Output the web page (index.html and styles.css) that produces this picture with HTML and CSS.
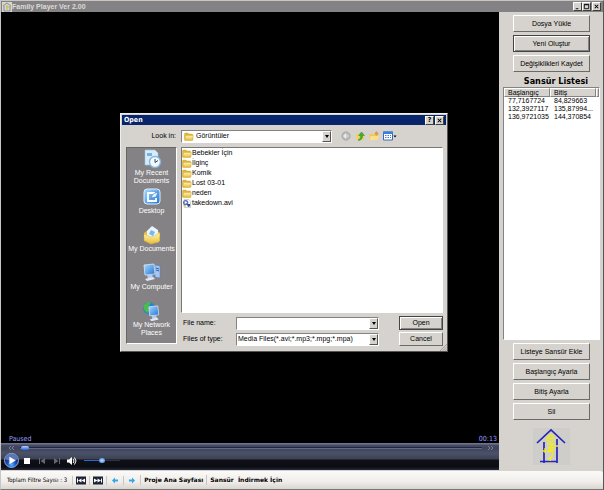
FILE: index.html
```html
<!DOCTYPE html>
<html lang="tr">
<head>
<meta charset="utf-8">
<title>Family Player Ver 2.00</title>
<link rel="stylesheet" href="styles.css">
</head>
<body>
<svg class="defs" aria-hidden="true">
  <defs>
    <linearGradient id="gold" x2="0" y2="1"><stop stop-color="#fff6ae"/><stop offset="1" stop-color="#e8bd3c"/></linearGradient>
    <linearGradient id="blue" x2="1" y2="1"><stop stop-color="#a8dcff"/><stop offset="1" stop-color="#2272d4"/></linearGradient>
    <radialGradient id="orb" cy=".8"><stop stop-color="#58b8ff"/><stop offset=".6" stop-color="#1c50c8"/><stop offset="1" stop-color="#143084"/></radialGradient>
    <symbol id="folder" viewBox="0 0 10 9"><path d="M.5 2q0-1 1-1h2.300l1 1h3q1 0 1 1v4.500q0 .8-.8.8H1.300q-.8 0-.8-.8z" fill="#e3b53a" stroke="#c59a30" stroke-width=".4"/><path d="M1.500 3.500h7.800L8.500 8.200H.8z" fill="url(#gold)" stroke="#cfa63a" stroke-width=".4"/></symbol>
    <symbol id="media" viewBox="0 0 10 10"><path d="M2 .5h5l2 2v7H2z" fill="#fff" stroke="#999" stroke-width=".5"/><circle cx="3.500" cy="4" r="3" fill="#5773b8"/><path d="M2.500 2.300v3.200L5.500 4z" fill="#fff"/><path d="M5 5.500h3.500V8L6 9z" fill="#334a8c"/><path d="M1 7l3 1" stroke="#d8a62c"/></symbol>
    <symbol id="screen" viewBox="0 0 20 20"><path d="M2 2l10-1 1 10-10 1z" fill="url(#blue)" stroke="#d5e9fa" stroke-width=".8"/><path d="M5 12l5-1 1 4-5 1z" fill="#b8cbe4"/><path d="M3 16l8-2 2 2-8 2z" fill="#dfe8f7"/></symbol>
  </defs>
</svg>

<header class="titlebar">
  <svg class="app-icon" viewBox="0 0 10 10"><path fill="#d8d6c8" d="M0 0h10v10H0z"/><path d="M1 4l4-3 4 3M2 4v5h6V4" fill="none" stroke="#6a78a8" stroke-width=".8"/><path d="M5 3v5M4 5h3" stroke="#d2c258" stroke-width="1.500"/></svg>
  <h1>Family Player Ver 2.00</h1>
  <button class="sys" aria-label="Minimize"><svg viewBox="0 0 8 8"><path d="M2 6.500h3" stroke="#000"/></svg></button>
  <button class="sys" aria-label="Maximize"><svg viewBox="0 0 8 8"><path d="M1.500 1.500h5v5h-5zM1.500 2h5" fill="none" stroke="#000"/></svg></button>
  <button class="sys close" aria-label="Close"><svg viewBox="0 0 8 8"><path d="M2 2l4 4M6 2L2 6" stroke="#000" stroke-width="1.200"/></svg></button>
</header>

<main class="main">
  <section class="player">
    <div class="video">
      <span>Paused</span><span>00:13</span>
    </div>
    <div class="controls">
      <div class="seek">
        <svg class="skip" viewBox="0 0 6 4"><path d="M3 0L1 2l2 2M6 0L4 2l2 2" fill="none" stroke="#929bb4" stroke-width=".7"/></svg>
        <div class="track"><i class="thumb"></i></div>
        <svg class="skip" viewBox="0 0 6 4"><path d="M0 0l2 2-2 2M3 0l2 2-2 2" fill="none" stroke="#929bb4" stroke-width=".7"/></svg>
      </div>
      <div class="transport">
        <button class="play" aria-label="Play"><svg viewBox="0 0 14 14"><circle cx="7" cy="7" r="6.500" fill="url(#orb)" stroke="#a9c3ee" stroke-width=".8"/><path d="M1.500 6a5.500 5 0 0 1 11 0q-5 2-11 0" fill="#b5cdf5" opacity=".45"/><path d="M5 3.500v7L11 7z" fill="#fff"/></svg></button>
        <button aria-label="Stop"><svg viewBox="0 0 10 10"><path d="M2 2h6v6H2z" fill="#fff"/></svg></button>
        <button aria-label="Previous"><svg viewBox="0 0 10 10"><path d="M2 2h1v6H2zM8 2v6L3.500 5z" fill="#636773"/></svg></button>
        <button aria-label="Next"><svg viewBox="0 0 10 10"><path d="M7 2h1v6H7zM2 2v6l4.500-3z" fill="#636773"/></svg></button>
        <button aria-label="Mute"><svg viewBox="0 0 10 10"><path d="M0 3.500h2L5 1v8L2 6.500H0z" fill="#fff"/><path d="M6.200 3q1.500 2 0 4M7.500 1.500q3 3.500 0 7" fill="none" stroke="#fff"/></svg></button>
        <div class="volume"><i class="knob"></i></div>
      </div>
    </div>
  </section>

  <aside class="side">
    <button class="btn">Dosya Yükle</button>
    <button class="btn default">Yeni Oluştur</button>
    <button class="btn">Değişiklikleri Kaydet</button>
    <h2>Sansür Listesi</h2>
    <div class="list">
      <table>
        <colgroup><col class="c1"><col class="c2"><col></colgroup>
        <thead><tr><th>Başlangıç</th><th>Bitiş</th><th></th></tr></thead>
        <tbody>
          <tr><td>77,7167724</td><td>84,829663</td><td></td></tr>
          <tr><td>132,3927117</td><td>135,87994...</td><td></td></tr>
          <tr><td>136,9721035</td><td>144,370854</td><td></td></tr>
        </tbody>
      </table>
    </div>
    <button class="btn">Listeye Sansür Ekle</button>
    <button class="btn">Başlangıç Ayarla</button>
    <button class="btn">Bitiş Ayarla</button>
    <button class="btn">Sil</button>
    <svg class="logo" viewBox="0 0 37 37"><path fill="#cecdca" d="M0 0h37v37H0z"/><path d="M4 15L18 2l14 13M11 14v21M24 11v24M7 33.500h17" fill="none" stroke="#2525b8" stroke-width="1.700"/><g fill="none" stroke="#eeea28" stroke-width="1.300"><path d="M14 9q4-4 7 0 1 4-3 5-5 0-4-5M15 10h5M16 12l4-2M14 16h7l-6 4 7-1-8 4 8-1M9 23h4M22 18h3M15 24q7-2 4 4l-4 4M19 28l-2 5M12 20v5"/></g></svg>
  </aside>
</main>

<footer class="toolbar">
  <span class="count">Toplam Filtre Sayısı : 3</span>
  <button aria-label="Önceki filtre"><svg viewBox="0 0 10 8"><path fill="#1d2234" d="M0 0h10v8H0z"/><path d="M1 2h1v4H1zM5.500 2v4L2 4zM9 2v4L5.500 4z" fill="#fff"/></svg></button>
  <button aria-label="Sonraki filtre"><svg viewBox="0 0 10 8"><path fill="#1d2234" d="M0 0h10v8H0z"/><path d="M8 2h1v4H8zM1 2v4l3.500-2zM4.500 2v4L8 4z" fill="#fff"/></svg></button>
  <button aria-label="Geri"><svg viewBox="0 0 10 8"><path d="M2 4l3-3v2h3v2H5v2z" fill="#35a5e8"/></svg></button>
  <button aria-label="İleri"><svg viewBox="0 0 10 8"><path d="M8 4L5 1v2H2v2h3v2z" fill="#35a5e8"/></svg></button>
  <a href="#proje">Proje Ana Sayfası</a>
  <a href="#indir">Sansür&nbsp; İndirmek İçin</a>
</footer>

<div class="dialog" role="dialog" aria-labelledby="dlg-title">
  <div class="dlg-title">
    <h2 id="dlg-title">Open</h2>
    <button class="sys" aria-label="Help">?</button>
    <button class="sys close" aria-label="Close dialog"><svg viewBox="0 0 8 8"><path d="M2 2l4 4M6 2L2 6" stroke="#000" stroke-width="1.200"/></svg></button>
  </div>
  <div class="look">
    <label for="look">Look in:</label>
    <div class="combo with-icon">
      <svg class="folder"><use href="#folder"/></svg>
      <select id="look"><option>Görüntüler</option></select>
      <i class="arrow"></i>
    </div>
    <div class="tools">
      <button aria-label="Back"><svg viewBox="0 0 10 10"><circle cx="5" cy="5" r="4.200" fill="#bbb" stroke="#999" stroke-width=".6"/><path d="M7.500 5H3M5 3L3 5l2 2" fill="none" stroke="#eee" stroke-width="1.200"/></svg></button>
      <button aria-label="Up one level"><svg viewBox="0 0 10 10"><path d="M1 3h3l1 1h4v5H1z" fill="#f2d268"/><path d="M3 9q3-1 2.500-4.500H3.500L6.500 1l3 3.500h-2Q8 8.500 4 9.500z" fill="#3fae2c" stroke="#237c1b" stroke-width=".4"/></svg></button>
      <button aria-label="New folder"><svg viewBox="0 0 10 10"><path d="M.5 3h3l1 1H9v5H.5z" fill="#f0c650"/><path d="M1.500 5H10L8.500 9h-8z" fill="#fbe08c"/><path d="M7.500.5v4M5.500 2.500h4M6 1l3 3M9 1L6 4" stroke="#ee8b32" stroke-width=".8"/></svg></button>
      <button class="views" aria-label="Views"><svg viewBox="0 0 14 10"><path d="M.5 1h9v8h-9z" fill="#fff" stroke="#3868ba"/><path d="M0 .5h10V3H0z" fill="#3c7cdc"/><path d="M2 4.500h1.500M4.500 4.500H6M7 4.500h1M2 6.500h1.500M4.500 6.500H6M7 6.500h1" stroke="#3c7cdc"/><path d="M10.500 4.500h3L12 6.500z"/></svg></button>
    </div>
  </div>
  <div class="dlg-body">
    <nav class="places">
      <a href="#recent"><svg viewBox="0 0 20 20"><path d="M3 1h10l3 3v12H3z" fill="#d8ebf8" stroke="#9fc4e0" stroke-width=".6"/><path d="M5 4h5v3H5z" fill="#72b2e6"/><circle cx="13" cy="13" r="5.500" fill="#f4faff" stroke="#80b8de" stroke-width="1.400"/><path d="M13 10v3.500l3-2" fill="none" stroke="#345" /></svg>My Recent Documents</a>
      <a href="#desktop"><svg viewBox="0 0 20 20"><rect x="2" y="2" width="16" height="15" rx="3" fill="url(#blue)" stroke="#d8efff"/><path d="M13 6H6v8h8v-3" fill="none" stroke="#fff" stroke-width="1.800"/><path d="M9 11l2-4 5-2-2 5z" fill="#eaf6ff" stroke="#3a80cc" stroke-width=".6"/></svg>Desktop</a>
      <a href="#documents"><svg viewBox="0 0 20 20"><path d="M2 8l8-6 8 6v8l-9 3-7-3z" fill="#edbd3e"/><path d="M5 6l5-5 6 4v8H5z" fill="#eaf5ff"/><path d="M9 5l4 2-2 4-4-2z" fill="#75b9ee"/><path d="M2 9l7 3 9-4-1 9-8 2-7-4z" fill="url(#gold)" stroke="#d4a736" stroke-width=".4"/></svg>My Documents</a>
      <a href="#computer"><svg viewBox="0 0 20 20"><path d="M13 2l5 1v12l-5-1z" fill="#a9c6ee" stroke="#5785cd" stroke-width=".6"/><path d="M14 5l3 1M14 7l3 1" stroke="#2762b8"/><use href="#screen" width="20" height="20"/></svg>My Computer</a>
      <a href="#network"><svg viewBox="0 0 20 20"><circle cx="7" cy="7" r="6" fill="#2c7fd2"/><path d="M2 4q4-5 7-2l-3 4 2 3-3 3Q0 8 2 4" fill="#4bbc4b"/><use href="#screen" x="5" y="4" width="18" height="18"/></svg>My Network Places</a>
    </nav>
    <div class="dlg-main">
      <ul class="files">
        <li><svg><use href="#folder"/></svg>Bebekler İçin</li>
        <li><svg><use href="#folder"/></svg>İlginç</li>
        <li><svg><use href="#folder"/></svg>Komik</li>
        <li><svg><use href="#folder"/></svg>Lost 03-01</li>
        <li><svg><use href="#folder"/></svg>neden</li>
        <li><svg><use href="#media"/></svg>takedown.avi</li>
      </ul>
      <div class="fields">
        <label for="fname">File name:</label>
        <div class="combo"><input id="fname" type="text"><i class="arrow"></i></div>
        <button class="btn default">Open</button>
        <label for="ftype">Files of type:</label>
        <div class="combo"><select id="ftype"><option>Media Files(*.avi;*.mp3;*.mpg;*.mpa)</option></select><i class="arrow"></i></div>
        <button class="btn">Cancel</button>
      </div>
    </div>
  </div>
  <svg class="grip" viewBox="0 0 8 8"><path d="M0 8l8-8M3 8l5-5M6 8l2-2" stroke="#888" stroke-width=".8"/></svg>
</div>
</body>
</html>
```
FILE: styles.css
```css
* { box-sizing: border-box; }
:root {
  --face: #d6d3ce;
  --ui: "Liberation Sans", Arial, sans-serif;
  --tahoma: "DejaVu Sans Condensed", "DejaVu Sans", sans-serif;
}
body {
  margin: 0;
  min-height: 100vh;
  display: flex;
  flex-direction: column;
  position: relative;
  background: var(--face);
  border: 1px solid #c8c6c2;
  border-right-color: #555;
  border-bottom-color: #777;
  font: 7px/10px var(--ui);
  color: #000;
}
h1, h2, ul { margin: 0; padding: 0; }
button, input, select { font: inherit; color: inherit; margin: 0; padding: 0; border-radius: 0; }
button { border: 0; background: none; }
svg { display: block; }
a { color: inherit; text-decoration: none; }
.defs { position: absolute; width: 0; height: 0; }

.titlebar {
  height: 11px;
  display: flex;
  align-items: center;
  background: #848284;
  color: #dedbd6;
  padding: 0 2px 0 1px;
}
.app-icon { width: 10px; height: 10px; }
.titlebar h1 { flex: 1; font: bold 7px/10px var(--ui); }
.sys {
  width: 9px;
  height: 9px;
  background: var(--face);
  border: 1px solid;
  border-color: #fff #404040 #404040 #fff;
  font: bold 7px/7px var(--tahoma);
  color: #000;
}
.sys svg { width: 7px; height: 7px; }
.close { margin-left: 1px; }

.main { flex: 1; display: flex; }
.player { flex: 1; display: flex; flex-direction: column; background: #000; }
.video {
  flex: 1;
  display: flex;
  justify-content: space-between;
  align-items: flex-end;
  padding: 0 2px 0 8px;
  font: 7px/7px var(--tahoma);
  color: #969eff;
}
.controls {
  height: 27px;
  background: linear-gradient(#70738e 0 1px, #484d68 2px, #3d4258 5px, #4b5168 10px, #3d4254 16px, #101116 17px, #0c0d12 24px, #242b40);
}
.seek { display: flex; align-items: center; gap: 6px; height: 9px; padding: 0 5px 0 7px; }
.skip { width: 6px; height: 4px; }
.track { flex: 1; height: 2px; background: #20263e; border-bottom: 1px solid #60698a; }
.thumb { display: block; width: 8px; height: 4px; margin: -1px 0 0 1px; border-radius: 2px; background: linear-gradient(#b6d4ff, #2862d8); }
.transport { display: flex; align-items: center; gap: 5px; height: 17px; padding-left: 3px; }
.transport svg { width: 10px; height: 10px; }
.transport .play svg { width: 15px; height: 15px; }
.transport .play { margin-right: -2px; }
.volume { width: 36px; height: 1px; margin-left: 2px; background: linear-gradient(90deg, #3168cc 50%, #30343f 50%); }
.knob { display: block; width: 6px; height: 5px; margin: -2px 0 0 15px; border-radius: 3px; background: radial-gradient(#c5e2ff, #2c69d8); }

.side {
  width: 104px;
  display: flex;
  flex-direction: column;
  align-items: center;
  gap: 3px;
  padding: 3px 3px 5px 4px;
}
.btn {
  background: var(--face);
  border: 1px solid;
  border-color: #fff #6c6a67 #6c6a67 #fff;
  text-align: center;
  white-space: nowrap;
}
.btn.default { border-color: #444; box-shadow: inset 1px 1px #fff, inset -1px -1px #848284; }
.side .btn { width: 77px; height: 17px; flex: none; }
.side h2 { font: bold 9px/12px var(--tahoma); align-self: flex-end; padding-right: 12px; }
.list {
  align-self: stretch;
  flex: 1;
  margin-top: -3px;
  background: #fff;
  border: 1px solid;
  border-color: #848284 #fff #fff #848284;
}
table { width: 100%; border-collapse: separate; border-spacing: 0; table-layout: fixed; }
.c1, .c2 { width: 46px; }
th {
  height: 9px;
  padding: 0 3px;
  font-weight: normal;
  line-height: 7px;
  text-align: left;
  background: var(--face);
  border: 1px solid;
  border-color: #fff #848284 #848284 #fff;
}
td { padding: 0 0 0 4px; line-height: 8px; white-space: nowrap; }
.logo { width: 37px; height: 37px; margin-top: 5px; flex: none; }

.toolbar {
  height: 18px;
  display: flex;
  align-items: center;
  padding-left: 4px;
  margin-top: 1px;
  background: linear-gradient(#fbfaf8, #f0edea 60%, #d9d5d0);
  border-radius: 0 3px 3px 0;
  font: 6px/10px var(--tahoma);
}
.toolbar > * { border-left: 1px solid #c9c5c0; padding: 0 3px; }
.toolbar .count { border-left-color: transparent; padding: 0 5px 0 1px; }
.toolbar a { font: bold 6px/10px "DejaVu Sans", sans-serif; }
.toolbar svg { width: 10px; height: 9px; }

.dialog {
  position: absolute;
  left: 119px;
  top: 112px;
  width: 328px;
  padding: 1px;
  background: var(--face);
  border: 1px solid;
  border-color: #eee #555 #555 #eee;
}
.dlg-title { display: flex; align-items: center; height: 10px; padding: 0 2px; background: #08246b; color: #fff; }
.dlg-title h2 { flex: 1; font: bold 7px/10px var(--tahoma); }
.look { display: flex; align-items: center; height: 22px; padding-left: 4px; }
.look label { width: 55px; padding-right: 5px; text-align: right; }
.combo {
  position: relative;
  height: 13px;
  background: #fff;
  border: 1px solid;
  border-color: #848284 #fff #fff #848284;
}
.look .combo { width: 151px; }
.combo input, .combo select {
  display: block;
  width: 100%;
  height: 11px;
  padding: 0 12px 0 1px;
  border: 0;
  background: none;
  appearance: none;
  outline: 0;
}
.combo.with-icon select { padding-left: 14px; }
.folder { position: absolute; left: 2px; top: 1px; width: 10px; height: 9px; }
.arrow {
  position: absolute;
  right: 0;
  top: 0;
  width: 9px;
  height: 11px;
  display: grid;
  place-items: center;
  background: var(--face);
  border: 1px solid;
  border-color: #fff #555 #555 #fff;
  pointer-events: none;
}
.arrow::before { content: ""; border: 2px solid transparent; border-top: 3px solid #000; border-bottom: 0; }
.tools { display: flex; gap: 4px; padding-left: 9px; }
.tools svg { width: 10px; height: 10px; }
.tools .views svg { width: 14px; }
.dlg-body { display: flex; gap: 4px; padding: 0 3px 4px 4px; }
.places {
  width: 51px;
  height: 197px;
  padding-top: 1px;
  display: flex;
  flex-direction: column;
  gap: 2px;
  background: #848284;
  border: 1px solid;
  border-color: #666 #fff #fff #666;
  color: #fff;
  line-height: 8px;
  text-align: center;
}
.places a {
  display: flex;
  flex-direction: column;
  align-items: center;
  min-height: 36px;
  white-space: nowrap;
}
.places a:first-child, .places a:last-child { padding: 0 4px; white-space: normal; }
.places svg { width: 20px; height: 20px; flex: none; }
.dlg-main { flex: 1; min-width: 0; }
.files {
  height: 166px;
  list-style: none;
  background: #fff;
  border: 1px solid;
  border-color: #777 #fff #fff #777;
}
.files li { display: flex; align-items: center; height: 10px; }
.files svg { width: 10px; height: 9px; }
.fields {
  display: grid;
  grid-template-columns: 55px 143px 1fr;
  row-gap: 2px;
  align-items: center;
  padding-top: 3px;
}
.fields label { padding-left: 2px; }
.fields .btn { height: 14px; justify-self: end; width: 44px; }
.grip { position: absolute; right: 0; bottom: 0; width: 7px; height: 7px; }
```
